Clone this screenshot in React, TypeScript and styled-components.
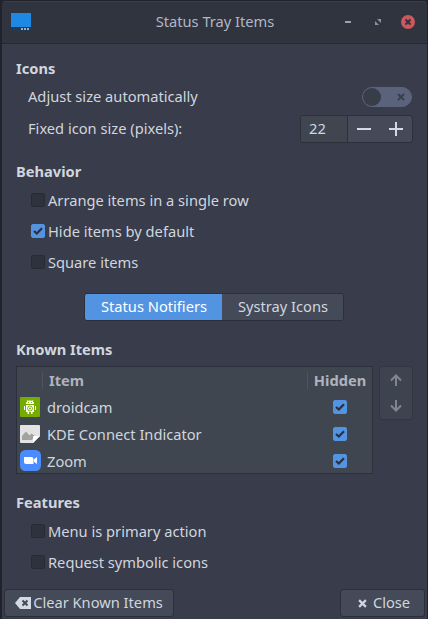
import React from "react";
import styled, { createGlobalStyle } from "styled-components";

const GlobalStyle = createGlobalStyle`
  * { box-sizing: border-box; }
  body {
    margin: 0;
    background: #20232b;
    font-family: "Noto Sans", sans-serif;
    font-size: 14.667px;
    line-height: 18px;
    color: #d0d6df;
  }
  svg { display: block; flex: none; }
`;

const Window = styled.div`
  width: 425px;
  height: 618px;
  margin: 1px 1px 0 2px;
  display: flex;
  flex-direction: column;
  background: #393c4a;
  border-radius: 4px 4px 0 0;
  overflow: hidden;
`;

const TitleBar = styled.header`
  height: 43px;
  flex: none;
  display: grid;
  grid-template-columns: 98px 1fr 94px;
  align-items: center;
  padding: 0 12px 1px 9px;
  background: #2f343f;
  border-top: 1px solid #393e49;
  border-bottom: 1px solid #262932;
`;

const Title = styled.h1`
  margin: 0;
  padding-bottom: 2px;
  font-size: inherit;
  font-weight: 400;
  text-align: center;
  white-space: nowrap;
  color: #b1b7c3;
`;

const WindowControls = styled.div`
  display: flex;
  align-items: center;
  justify-content: flex-end;
  gap: 16px;
`;

const Content = styled.main`
  flex: 1;
  padding: 15px 14px 0;
`;

const Section = styled.section<{ $height: number }>`
  height: ${(p) => p.$height}px;
`;

const Heading = styled.h2<{ $gap?: number }>`
  margin: 0 0 ${(p) => p.$gap ?? 0}px;
  padding-bottom: 2px;
  font-size: inherit;
  font-weight: 700;
`;

const Label = styled.span`
  padding-bottom: 2px;
  white-space: nowrap;
`;

const SettingRow = styled.div`
  display: flex;
  align-items: center;
  justify-content: space-between;
  margin-top: 8px;
  padding-left: 12px;
`;

const SwitchTrack = styled.div`
  width: 50px;
  height: 20px;
  margin-right: 1px;
  display: flex;
  align-items: center;
  justify-content: space-between;
  padding-right: 6px;
  border: 1px solid #5b627b;
  border-radius: 10px;
  background: #5b627b;
  color: #393f4b;
`;

const SwitchKnob = styled.span`
  width: 18px;
  height: 18px;
  border-radius: 50%;
  background: #373d49;
`;

const SpinBox = styled.div`
  width: 113px;
  height: 28px;
  display: grid;
  grid-template-columns: 46px 32px 33px;
  align-items: center;
  border: 1px solid #2c303b;
  border-radius: 3px;
  background: #444a58;
  overflow: hidden;
`;

const SpinValue = styled.span`
  height: 26px;
  line-height: 24px;
  padding-left: 8px;
  background: #404650;
`;

const SpinButton = styled.span<{ $divided?: boolean }>`
  height: 26px;
  display: flex;
  align-items: center;
  justify-content: center;
  border-left: ${(p) => (p.$divided ? "1px solid #2c303b" : "0")};
`;

const CheckRow = styled.label`
  height: 31px;
  display: flex;
  align-items: center;
  gap: 3px;
  padding: 0 0 2px 15px;
`;

const CheckSquare = styled.span<{ $checked?: boolean }>`
  width: 14px;
  height: 14px;
  flex: none;
  display: flex;
  align-items: center;
  justify-content: center;
  border-radius: 2px;
  border: 1px solid ${(p) => (p.$checked ? "#5294e2" : "#282b35")};
  background: ${(p) => (p.$checked ? "#5294e2" : "#2e323d")};
`;

const Tabs = styled.div`
  width: 260px;
  height: 28px;
  margin-left: 68px;
  display: grid;
  grid-template-columns: 137px 1fr;
  border: 1px solid #2c303b;
  border-radius: 3px;
  overflow: hidden;
`;

const Tab = styled.div<{ $active?: boolean }>`
  height: 26px;
  line-height: 24px;
  padding-left: 1px;
  text-align: center;
  white-space: nowrap;
  color: ${(p) => (p.$active ? "#ffffff" : "#d0d6df")};
  background: ${(p) => (p.$active ? "#5294e2" : "#444a58")};
`;

const ListArea = styled.div`
  display: flex;
  align-items: flex-start;
  gap: 6px;
`;

const ItemTable = styled.div`
  width: 357px;
  height: 108px;
  border: 1px solid #2c303b;
  background: #404650;
  overflow: hidden;
`;

const TableHead = styled.div`
  height: 27px;
  display: grid;
  grid-template-columns: 26px 265px 1fr;
  align-items: center;
  font-weight: 700;
  line-height: 17px;
  color: #aeb3bd;
`;

const HeadCell = styled.span`
  height: 17px;
  border-right: 1px solid #4f5460;
  padding-left: 6px;
`;

const HiddenHead = styled.span`
  text-align: center;
`;

const TableRow = styled.div`
  height: 27px;
  display: grid;
  grid-template-columns: 27px 264px 1fr;
  align-items: center;
  padding: 0 0 2px 3px;
`;

const CheckCell = styled.span`
  padding-left: 22px;
`;

const MoveButtons = styled.div`
  width: 34px;
  height: 54px;
  display: flex;
  flex-direction: column;
  align-items: center;
  justify-content: space-around;
  border: 1px solid #323642;
  border-radius: 3px;
  background: #3e4350;
`;

const ActionBar = styled.footer`
  display: flex;
  justify-content: space-between;
  padding: 0 2px 2px;
`;

const Button = styled.div<{ $width: number; $gap: number; $inset?: number }>`
  width: ${(p) => p.$width}px;
  height: 28px;
  display: flex;
  align-items: center;
  justify-content: center;
  gap: ${(p) => p.$gap}px;
  padding-left: ${(p) => p.$inset ?? 0}px;
  border: 1px solid #2c303b;
  border-radius: 3px;
  background: #444a58;
`;

const Cross = ({ size, width = 2 }: { size: number; width?: number }) => (
  <svg width={size} height={size} viewBox="0 0 8 8">
    <path d="M1 1L7 7M7 1L1 7" stroke="currentColor" strokeWidth={width} />
  </svg>
);

const Check = ({ checked }: { checked?: boolean }) => (
  <CheckSquare $checked={checked}>
    {checked && (
      <svg width="10" height="8" viewBox="0 0 10 8">
        <path d="M1 4L3.8 6.5L9 1.2" fill="none" stroke="#2b3040" strokeWidth="2.2" />
      </svg>
    )}
  </CheckSquare>
);

const PanelIcon = () => (
  <svg width="20" height="18" viewBox="0 0 20 18">
    <rect width="20" height="18" rx="0.5" fill="#243a52" />
    <rect width="20" height="14" fill="#1e88e5" />
    <path d="M10 15h2v2h-2zM13 15h2v2h-2zM16 15h2v2h-2z" fill="#a6b0bb" />
  </svg>
);

const MinimizeIcon = () => (
  <svg width="14" height="14" viewBox="0 0 14 14">
    <path d="M4 6h6v2H4z" fill="#9ba1ad" />
  </svg>
);

const MaximizeIcon = () => (
  <svg width="14" height="14" viewBox="0 0 14 14">
    <path d="M6 4h4v4zM4 6v4h4z" fill="#8b919d" />
  </svg>
);

const CloseIcon = () => (
  <svg width="14" height="14" viewBox="0 0 14 14">
    <circle cx="7" cy="7" r="7" fill="#cc575d" />
    <path d="M4.5 4.5l5 5m0-5l-5 5" stroke="#2f343f" strokeWidth="2" />
  </svg>
);

const DroidIcon = () => (
  <svg width="20" height="20" viewBox="0 0 20 20">
    <rect width="20" height="20" rx="1" fill="#76ab00" />
    <path d="M6 7a4 3.6 0 0 1 8 0zM6 8h8v7H6zM4 9h1v4H4zM15 9h1v4h-1zM7.5 15H9v2H7.5zM11 15h1.500v2H11z" fill="#fff" />
    <path d="M7 3l1.200 2M13 3l-1.200 2" stroke="#fff" strokeWidth="0.7" />
    <path d="M8 5h1v1H8zM11 5h1v1h-1z" fill="#76ab00" />
    <circle cx="10" cy="11.500" r="2.500" fill="none" stroke="#76ab00" strokeWidth="0.9" />
    <circle cx="10" cy="11.500" r="0.900" fill="#76ab00" />
  </svg>
);

const PictureIcon = () => (
  <svg width="20" height="18" viewBox="0 0 20 18">
    <path d="M1 0h18a1 1 0 0 1 1 1v10l-7 7H1a1 1 0 0 1-1-1V1a1 1 0 0 1 1-1z" fill="#e3e3e3" />
    <path d="M2 15v-4l4-4.500 3.500 4 2-2L15 11l-3 4z" fill="#a2a2a2" />
    <path d="M20 11h-6a1 1 0 0 0-1 1v6z" fill="#fff" />
  </svg>
);

const ZoomIcon = () => (
  <svg width="21" height="21" viewBox="0 0 21 21">
    <rect width="21" height="21" rx="5.500" fill="#4a8cff" />
    <path d="M4 7h7.500a2 2 0 0 1 2 2v5H6a2 2 0 0 1-2-2zM14 9.300L17 7v7l-3-2.300z" fill="#fff" />
  </svg>
);

const Arrow = ({ down }: { down?: boolean }) => (
  <svg width="12" height="12" viewBox="0 0 12 12">
    <path
      d={down ? "M6 0v10M1 5.500l5 5 5-5" : "M6 12V2M1 6.500l5-5 5 5"}
      fill="none"
      stroke="#80858f"
      strokeWidth="2"
    />
  </svg>
);

const BackspaceIcon = () => (
  <svg width="16" height="12" viewBox="0 0 16 12">
    <path d="M5 0h11v12H5L0 6z" fill="#d3dae3" />
    <path d="M7.500 3.500l5 5m0-5l-5 5" stroke="#444a58" strokeWidth="2" />
  </svg>
);

const items = [
  { name: "droidcam", Icon: DroidIcon },
  { name: "KDE Connect Indicator", Icon: PictureIcon },
  { name: "Zoom", Icon: ZoomIcon },
];

export default function App() {
  return (
    <>
      <GlobalStyle />
      <Window>
        <TitleBar>
          <PanelIcon />
          <Title>Status Tray Items</Title>
          <WindowControls>
            <MinimizeIcon />
            <MaximizeIcon />
            <CloseIcon />
          </WindowControls>
        </TitleBar>
        <Content>
          <Section $height={103}>
            <Heading>Icons</Heading>
            <SettingRow>
              <Label>Adjust size automatically</Label>
              <SwitchTrack>
                <SwitchKnob />
                <Cross size={8} />
              </SwitchTrack>
            </SettingRow>
            <SettingRow>
              <Label>Fixed icon size (pixels):</Label>
              <SpinBox>
                <SpinValue>22</SpinValue>
                <SpinButton $divided>
                  <svg width="14" height="14" viewBox="0 0 14 14">
                    <path d="M0 6h14v2H0z" fill="#d3dae3" />
                  </svg>
                </SpinButton>
                <SpinButton>
                  <svg width="14" height="14" viewBox="0 0 14 14">
                    <path d="M0 6h14v2H0zM6 0h2v14H6z" fill="#d3dae3" />
                  </svg>
                </SpinButton>
              </SpinBox>
            </SettingRow>
          </Section>
          <Section $height={131}>
            <Heading $gap={3}>Behavior</Heading>
            <CheckRow><Check />Arrange items in a single row</CheckRow>
            <CheckRow><Check checked />Hide items by default</CheckRow>
            <CheckRow><Check />Square items</CheckRow>
          </Section>
          <Section $height={47}>
            <Tabs>
              <Tab $active>Status Notifiers</Tab>
              <Tab>Systray Icons</Tab>
            </Tabs>
          </Section>
          <Section $height={153}>
            <Heading $gap={6}>Known Items</Heading>
            <ListArea>
              <ItemTable>
                <TableHead>
                  <HeadCell />
                  <HeadCell>Item</HeadCell>
                  <HiddenHead>Hidden</HiddenHead>
                </TableHead>
                {items.map(({ name, Icon }) => (
                  <TableRow key={name}>
                    <Icon />
                    <span>{name}</span>
                    <CheckCell><Check checked /></CheckCell>
                  </TableRow>
                ))}
              </ItemTable>
              <MoveButtons>
                <Arrow />
                <Arrow down />
              </MoveButtons>
            </ListArea>
          </Section>
          <Section $height={85}>
            <Heading $gap={3}>Features</Heading>
            <CheckRow><Check />Menu is primary action</CheckRow>
            <CheckRow><Check />Request symbolic icons</CheckRow>
          </Section>
        </Content>
        <ActionBar>
          <Button $width={170} $gap={2}>
            <BackspaceIcon />
            <Label>Clear Known Items</Label>
          </Button>
          <Button $width={85} $gap={6} $inset={3}>
            <Cross size={9} />
            <Label>Close</Label>
          </Button>
        </ActionBar>
      </Window>
    </>
  );
}
